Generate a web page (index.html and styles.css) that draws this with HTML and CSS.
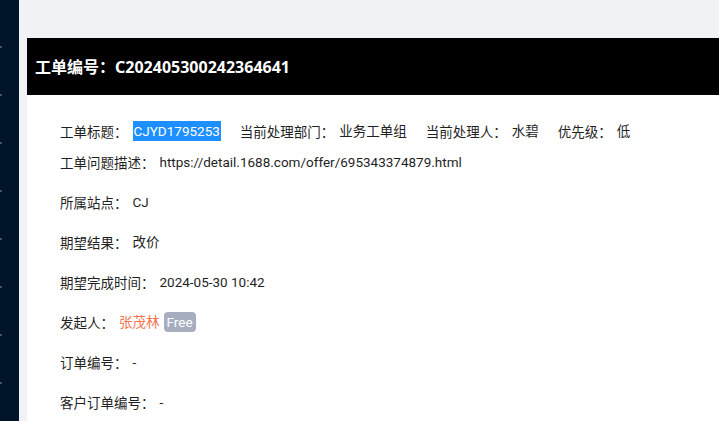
FILE: index.html
```html
<!DOCTYPE html>
<html lang="zh-CN">
<head>
<meta charset="utf-8">
<title>工单详情</title>
<link rel="stylesheet" href="styles.css">
</head>
<body>
<div class="layout">
  <aside class="sider">
    <span class="tick"></span><span class="tick"></span><span class="tick"></span><span class="tick"></span>
    <span class="tick"></span><span class="tick"></span><span class="tick"></span><span class="tick"></span>
  </aside>
  <main class="main">
    <section class="card">
      <header class="card-head">工单编号：C202405300242364641</header>
      <div class="card-body">
        <div class="summary">
          <div class="row">
            <span class="item"><span class="label">工单标题：</span><span class="value hl">CJYD1795253</span></span>
            <span class="item"><span class="label">当前处理部门：</span><span class="value">业务工单组</span></span>
            <span class="item"><span class="label">当前处理人：</span><span class="value">水碧</span></span>
            <span class="item"><span class="label">优先级：</span><span class="value">低</span></span>
          </div>
          <div class="row">
            <span class="label">工单问题描述：</span><span class="value">https://detail.1688.com/offer/695343374879.html</span>
          </div>
        </div>
        <div class="list">
          <div class="row"><span class="label">所属站点：</span><span class="value">CJ</span></div>
          <div class="row"><span class="label">期望结果：</span><span class="value">改价</span></div>
          <div class="row"><span class="label">期望完成时间：</span><span class="value">2024-05-30 10:42</span></div>
          <div class="row"><span class="label">发起人：</span><span class="value name">张茂林</span><span class="badge">Free</span></div>
          <div class="row"><span class="label">订单编号：</span><span class="value">-</span></div>
          <div class="row"><span class="label">客户订单编号：</span><span class="value">-</span></div>
        </div>
      </div>
    </section>
  </main>
</div>
</body>
</html>
```
FILE: styles.css
```css
* { box-sizing: border-box; }
html, body { margin: 0; padding: 0; height: 100%; overflow: hidden; }
body {
  font-family: Roboto, "Noto Sans CJK SC", sans-serif;
  font-size: 13.5px;
  color: #1f1f1f;
  background: #f0f2f5;
}
.layout { display: flex; height: 100%; }
.sider {
  width: 19px;
  flex: none;
  background: #001529;
  display: flex;
  flex-direction: column;
  gap: 46px;
  padding-top: 46px;
}
.tick {
  display: block;
  width: 2px;
  height: 2px;
  background: #4a5563;
}
.main {
  flex: 1;
  padding: 38px 0 0 8px;
  display: flex;
  flex-direction: column;
}
.card { flex: 1; background: #fff; display: flex; flex-direction: column; }
.card-head {
  height: 57px;
  background: #000;
  color: #fff;
  font-family: "Noto Sans", "Noto Sans CJK SC", sans-serif;
  font-size: 16px;
  font-weight: 700;
  display: flex;
  align-items: center;
  padding-left: 8px;
  padding-bottom: 1px;
}
.card-body { padding: 26px 0 0 33px; }
.summary { display: flex; flex-direction: column; gap: 11px; margin-bottom: 20px; }
.list { display: flex; flex-direction: column; gap: 20px; }
.row { display: flex; align-items: center; height: 20px; white-space: nowrap; }
.item { display: flex; align-items: center; margin-right: 19px; }
.label { margin-right: 5px; }
.value { line-height: 20px; }
.hl { background: #1e8fff; color: #fff; padding: 0 1px; }
.name { color: #f4764f; }
.badge {
  margin-left: 4px;
  background: #a6aec0;
  color: #fff;
  border-radius: 4px;
  padding: 0 3px;
  height: 20px;
  line-height: 20px;
}
```
